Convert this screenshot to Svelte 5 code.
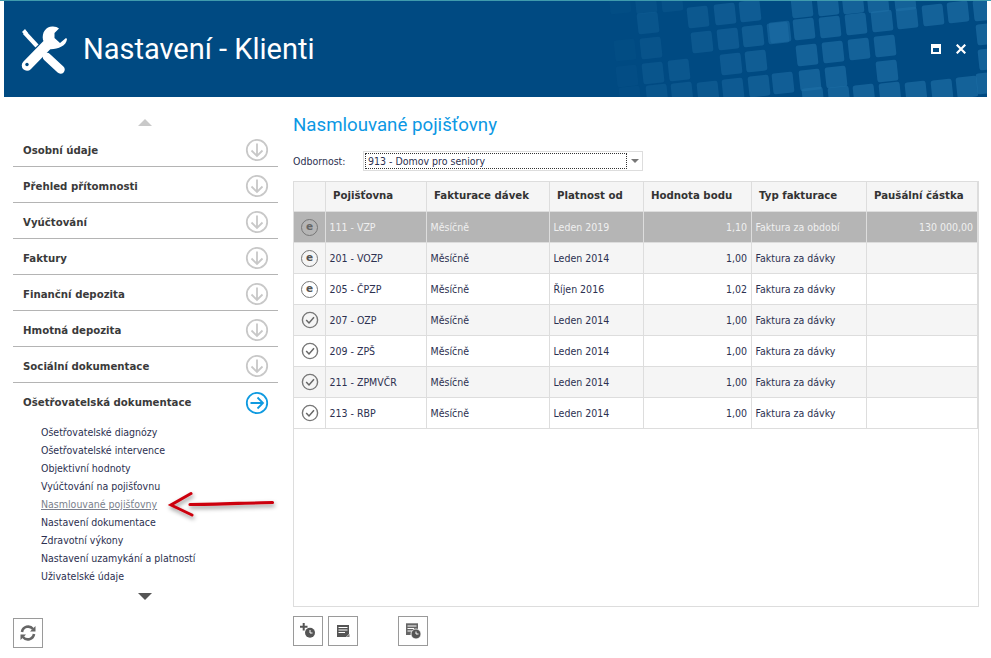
<script>
  const squares = [
    [620,3,.12],[646,3,.3],[672,1,.3],[648,23,.45],[698,17,.6],[725,14,.7],[750,11,.75],
    [702,42,.6],[728,39,.7],[753,36,.8],[778,33,.85],[625,50,.12],[651,48,.4],[731,64,.7],[756,61,.8],
    [627,76,.15],[653,73,.45],[679,70,.55],[783,83,.85],[733,89,.7],[759,86,.8],[657,95,.45],[682,93,.55],[708,92,.6],[630,97,.15],
    [802,7,.9],[828,5,1],[853,3,1],[878,2,1],[905,0,1],[780,32,.85],[804,29,1],[830,27,1],[856,24,1],[882,21,1],[907,18,1],[933,15,1],[958,12,1],[984,10,1],
    [987,34,1],[807,55,1],[833,52,1],[859,49,1],[885,46,1],[887,71,1],[810,80,1],[836,77,1],[989,59,1],
    [813,98,1],[839,97,1],[864,95,1],[890,93,1],[916,92,1],[942,90,1],[967,87,1],[987,83,1]
  ];
  const sections = ['Osobní údaje','Přehled přítomnosti','Vyúčtování','Faktury','Finanční depozita','Hmotná depozita','Sociální dokumentace'];
  const items = ['Ošetřovatelské diagnózy','Ošetřovatelské intervence','Objektivní hodnoty','Vyúčtování na pojišťovnu','Nasmlouvané pojišťovny','Nastavení dokumentace','Zdravotní výkony','Nastavení uzamykání a platností','Uživatelské údaje'];
  const heads = ['','Pojišťovna','Fakturace dávek','Platnost od','Hodnota bodu','Typ fakturace','Paušální částka'];
  const rows = [
    ['e','111 - VZP','Měsíčně','Leden 2019','1,10','Faktura za období','130 000,00'],
    ['e','201 - VOZP','Měsíčně','Leden 2014','1,00','Faktura za dávky',''],
    ['e','205 - ČPZP','Měsíčně','Říjen 2016','1,02','Faktura za dávky',''],
    ['c','207 - OZP','Měsíčně','Leden 2014','1,00','Faktura za dávky',''],
    ['c','209 - ZPŠ','Měsíčně','Leden 2014','1,00','Faktura za dávky',''],
    ['c','211 - ZPMVČR','Měsíčně','Leden 2014','1,00','Faktura za dávky',''],
    ['c','213 - RBP','Měsíčně','Leden 2014','1,00','Faktura za dávky','']
  ];
</script>

<div class="page">
  <header class="banner">
    <svg class="pattern" width="983" height="96" viewBox="4 1 983 96" aria-hidden="true">
      {#each squares as [x, y, o]}
        <rect x={x-10.5} y={y-10.5} width="21" height="21" rx="2.5" fill="#1f6fa5" opacity={o*0.66} transform="rotate(-6 {x} {y})" />
      {/each}
    </svg>
    <svg class="logo" width="50" height="50" viewBox="20 24 50 50" aria-hidden="true">
      <path d="M24.5 32.5 L37 46" stroke="#fff" stroke-width="4.2" fill="none"/>
      <path d="M22 32 L25 29 L28 33 L26 36 Z" fill="#fff"/>
      <path d="M47 57 L60.5 69.5" stroke="#fff" stroke-width="8.5" stroke-linecap="round" fill="none"/>
      <path d="M27 65.5 L47 45" stroke="#fff" stroke-width="10.5" stroke-linecap="round" fill="none"/>
      <path d="M53 26.5 C46.5 26 41.5 32 43 40 L48 49 C56 50 66.5 46.5 67 39 L66 38 L60 43 L54.5 38 L54.5 33 L59 28.5 C57.5 27.3 55.5 26.6 53 26.5 Z" fill="#fff"/>
      <circle cx="27" cy="64.5" r="1.7" fill="#004a82"/>
    </svg>
    <h1>Nastavení - Klienti</h1>
    <div class="winctl">
      <svg width="10" height="10" viewBox="0 0 10 10" aria-hidden="true"><path fill="#fff" fill-rule="evenodd" d="M0 0H10V10H0Z M2 4V8H8V4Z"/></svg>
      <svg width="10" height="10" viewBox="0 0 10 10" aria-hidden="true"><path d="M.7 .7L9.3 9.3M9.3 .7L.7 9.3" stroke="#fff" stroke-width="2.2"/></svg>
    </div>
  </header>

  <div class="body">
    <aside class="side">
      <div class="tri up"></div>
      {#each sections as s}
        <div class="sec">
          <span>{s}</span>
          <svg width="24" height="24" viewBox="0 0 24 24" aria-hidden="true"><circle cx="12" cy="12" r="10.2" fill="none" stroke="#c8c8c8" stroke-width="1.8"/><path d="M12 5.5V18M6.5 12.5L12 18L17.5 12.5" fill="none" stroke="#c8c8c8" stroke-width="1.8"/></svg>
        </div>
      {/each}
      <div class="sec open">
        <span>Ošetřovatelská dokumentace</span>
        <svg width="24" height="24" viewBox="0 0 24 24" aria-hidden="true"><circle cx="12" cy="12" r="10.2" fill="none" stroke="#0f9ae0" stroke-width="1.8"/><path d="M5.5 12H18M12.5 6.5L18 12L12.5 17.5" fill="none" stroke="#0f9ae0" stroke-width="1.8"/></svg>
      </div>
      <ul>
        {#each items as it}
          <li class:cur={it === 'Nasmlouvané pojišťovny'}>{it}</li>
        {/each}
      </ul>
      <div class="tri down"></div>
      <button class="btn refresh" aria-label="Obnovit">
        <svg width="18" height="18" viewBox="0 0 18 18" aria-hidden="true"><path d="M3 8A6.2 6.2 0 0 1 14 5M15 10A6.2 6.2 0 0 1 4 13" fill="none" stroke="#666" stroke-width="2.6"/><path d="M16.5 2V7.5H11ZM1.5 16V10.5H7Z" fill="#666"/></svg>
      </button>
    </aside>

    <main>
      <h2>Nasmlouvané pojišťovny</h2>
      <div class="field">
        <label for="odb">Odbornost:</label>
        <div class="select" id="odb">
          <span class="val">913 - Domov pro seniory</span>
          <i></i>
        </div>
      </div>
      <div class="grid">
        <table>
          <colgroup><col class="c0"><col class="c1"><col class="c2"><col class="c3"><col class="c4"><col class="c5"><col class="c6"></colgroup>
          <thead><tr>{#each heads as h}<th>{h}</th>{/each}</tr></thead>
          <tbody>
            {#each rows as r, i}
              <tr class:sel={i === 0} class:alt={i % 2 === 1 && i !== 0}>
                <td class="ic">
                  {#if r[0] === 'e'}
                    <span class="badge"><b>e</b></span>
                  {:else}
                    <svg width="18" height="18" viewBox="0 0 18 18" aria-hidden="true" class="chk"><circle cx="9" cy="9" r="7.6" fill="none" stroke="#777" stroke-width="1.4"/><path d="M5.2 9L8 12L13 6.2" fill="none" stroke="#666" stroke-width="1.5"/></svg>
                  {/if}
                </td>
                <td>{r[1]}</td>
                <td>{r[2]}</td>
                <td>{r[3]}</td>
                <td class="num">{r[4]}</td>
                <td>{r[5]}</td>
                <td class="num">{r[6]}</td>
              </tr>
            {/each}
          </tbody>
        </table>
      </div>
      <div class="tools">
        <button class="btn" aria-label="Přidat">
          <svg width="20" height="20" viewBox="0 0 20 20" aria-hidden="true"><path d="M5.7 2V9.5M2 5.7H9.5" stroke="#555" stroke-width="2"/><circle cx="12" cy="11.7" r="5" fill="#555"/><path d="M12 9V12H14.5" fill="none" stroke="#fff" stroke-width="1"/></svg>
        </button>
        <button class="btn" aria-label="Dokument">
          <svg width="20" height="20" viewBox="0 0 20 20" aria-hidden="true"><path d="M4 4H16V13L13 16H4Z" fill="#555"/><path d="M5.5 6.5H14.5M5.5 9H14.5M5.5 11.5H12" stroke="#fff" stroke-width="1"/><path d="M13.5 16L16.5 13V16Z" fill="#777"/></svg>
        </button>
        <button class="btn gap" aria-label="Historie">
          <svg width="20" height="20" viewBox="0 0 20 20" aria-hidden="true"><path d="M3 2.3H15V14H3Z" fill="#666"/><path d="M4.5 5H13.5M4.5 7.5H11M4.5 10H9" stroke="#fff" stroke-width="1"/><circle cx="13" cy="13" r="5" fill="#555" stroke="#fff" stroke-width=".8"/><path d="M13 10.5V13H15.5" fill="none" stroke="#fff" stroke-width="1"/></svg>
        </button>
      </div>
    </main>
  </div>

  <svg class="arrow" width="120" height="40" viewBox="165 485 120 40" aria-hidden="true">
    <defs><filter id="sh" x="-20%" y="-50%" width="140%" height="220%"><feDropShadow dx="1" dy="2.5" stdDeviation="2" flood-color="#000" flood-opacity=".45"/></filter></defs>
    <g filter="url(#sh)" fill="none" stroke="#cc0010" stroke-linecap="round">
      <path d="M190 504.5 C215 504.5 245 503 272.5 502.5" stroke-width="3.2"/>
      <path d="M191 493.5 L171 505 L192 515" stroke-width="3"/>
    </g>
  </svg>
</div>

<style>
  :global(body) { margin: 0; background: #fff; }
  .page { position: relative; width: 991px; height: 658px; overflow: hidden; border-top: 1px solid #3f9bad; box-sizing: border-box; font-family: "DejaVu Sans Condensed", "DejaVu Sans", sans-serif; font-size: 10.5px; color: #2c3050; }
  .banner { position: relative; margin: 0 4px; height: 96px; background: #004a82; display: flex; align-items: center; overflow: hidden; }
  .pattern { position: absolute; left: 0; top: 0; }
  .logo { position: relative; margin-left: 16px; }
  h1 { position: relative; margin: 0 0 0 13px; font: 400 29px Roboto, sans-serif; color: #fff; }
  .winctl { position: absolute; right: 21px; top: 43px; display: flex; align-items: center; gap: 15px; }
  .winctl svg { display: block; }
  .body { display: flex; padding-left: 13px; }
  .side { width: 265px; display: flex; flex-direction: column; }
  .tri { width: 0; height: 0; border-left: 7px solid transparent; border-right: 7px solid transparent; align-self: flex-start; margin-left: 125px; }
  .tri.up { border-bottom: 7px solid #c9c9c9; margin-top: 22px; margin-bottom: 5px; }
  .tri.down { border-top: 7px solid #555; margin-top: 8px; }
  .sec { height: 36px; box-sizing: border-box; border-bottom: 1px solid #b4b4b4; display: flex; align-items: center; justify-content: space-between; padding: 3px 9px 0 10px; font: 700 10.2px "DejaVu Sans", sans-serif; color: #3a3a3a; }
  .sec svg { display: block; }
  .sec.open { border-bottom: 0; }
  ul { list-style: none; margin: 4px 0 0; padding: 0 0 0 28px; }
  li { height: 18px; line-height: 18px; white-space: nowrap; }
  li.cur { color: #7a7f8c; text-decoration: underline; }
  .btn { width: 30px; height: 30px; padding: 0; background: #fff; border: 1px solid #9a9a9a; display: flex; align-items: center; justify-content: center; box-sizing: border-box; }
  .refresh { margin-top: 18px; }
  main { margin-left: 15px; width: 686px; }
  h2 { margin: 15px 0 0; font: 400 18.7px/26px Roboto, sans-serif; color: #0c98e4; }
  .field { display: flex; align-items: center; margin-top: 13px; height: 20px; }
  label { width: 70px; }
  .select { position: relative; width: 280px; height: 20px; box-sizing: border-box; border: 1px solid #ddd; padding: 1px; }
  .val { display: block; width: 262px; height: 16px; box-sizing: border-box; border: 1px dotted #333; padding-left: 2px; line-height: 15px; }
  .select i { position: absolute; right: 3px; top: 7px; border-left: 4px solid transparent; border-right: 4px solid transparent; border-top: 4px solid #777; }
  .grid { margin-top: 10px; width: 686px; height: 426px; box-sizing: border-box; border: 1px solid #ddd; }
  table { border-collapse: separate; border-spacing: 0; table-layout: fixed; width: 684px; }
  .c0 { width: 32px; } .c1 { width: 101px; } .c2 { width: 123px; } .c3 { width: 94px; } .c4 { width: 108px; } .c5 { width: 115px; } .c6 { width: 111px; }
  th { height: 30px; box-sizing: border-box; background: #f5f5f5; border-right: 1px solid #ddd; border-bottom: 1px solid #ddd; text-align: left; padding: 0 0 2px 7px; font: 700 10.2px "DejaVu Sans", sans-serif; color: #333; white-space: nowrap; overflow: hidden; }
  td { height: 31px; box-sizing: border-box; border-right: 1px solid #ddd; border-bottom: 1px solid #ddd; padding: 0 4px 0 3.5px; white-space: nowrap; overflow: hidden; }
  td.num { text-align: right; }
  tr.alt td { background: #f5f5f5; }
  tr.sel td { background: #b5b5b5; color: #f0f0f0; }
  td.ic { padding: 0; }
  .badge { display: flex; width: 17px; height: 17px; box-sizing: border-box; margin: 0 auto; align-items: center; justify-content: center; border: 1.4px solid #777; border-radius: 50%; color: #555; font: 700 10.5px/1 "DejaVu Sans", sans-serif; }
  tr.sel .badge { color: #666; }
  .badge b { position: relative; top: -1px; }
  .chk { display: block; margin: 0 auto; }
  .tools { display: flex; gap: 5px; margin-top: 9px; }
  .tools .gap { margin-left: 35px; }
  .arrow { position: absolute; left: 165px; top: 484px; }
</style>
